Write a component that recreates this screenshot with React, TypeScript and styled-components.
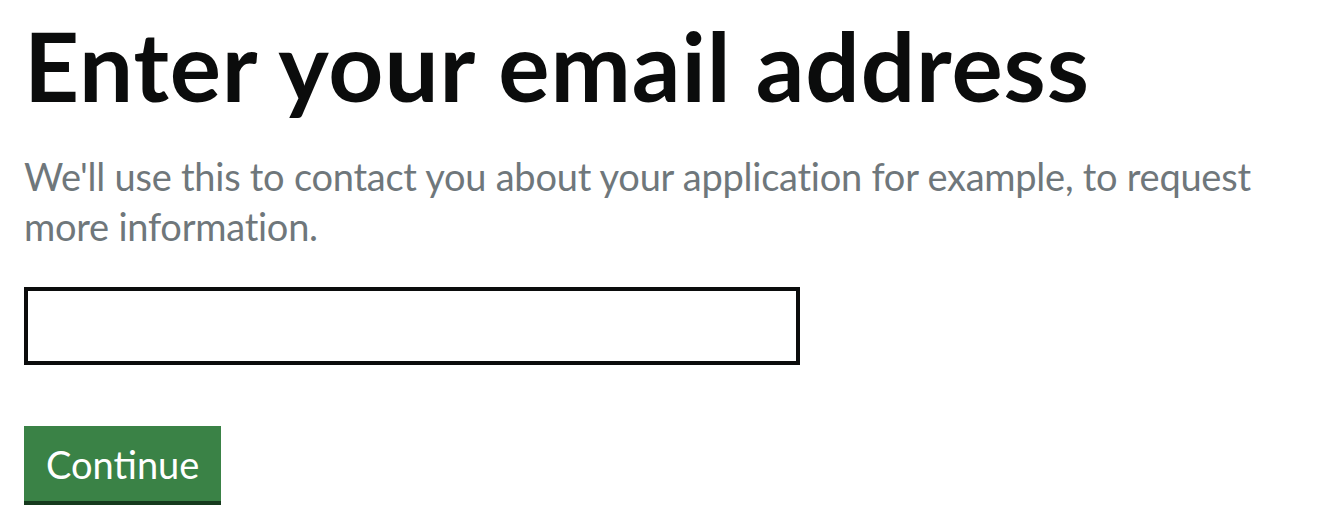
import React from "react";
import styled, { createGlobalStyle } from "styled-components";

const GlobalStyle = createGlobalStyle`
  html, body {
    margin: 0;
    padding: 0;
    background: #ffffff;
  }
  body {
    font-family: Lato, "Liberation Sans", Arial, sans-serif;
    color: #0b0c0c;
  }
  * { box-sizing: border-box; }
`;

const Page = styled.main`
  display: flex;
  flex-direction: column;
  align-items: flex-start;
  padding: 15px 24px 0 24px;
`;

const Heading = styled.h1`
  margin: 0 0 36px 0;
  font-family: Lato, "Liberation Sans", Arial, sans-serif;
  font-weight: 700;
  font-size: 96px;
  line-height: 100px;
  letter-spacing: 0.9px;
  color: #0b0c0c;
`;

const Hint = styled.p`
  margin: 0 0 36px 0;
  max-width: 1290px;
  font-size: 38px;
  line-height: 50px;
  letter-spacing: -0.25px;
  color: #6f777b;
`;

const Input = styled.input`
  display: block;
  width: 776px;
  height: 78px;
  margin: 0 0 61px 0;
  padding: 0 10px;
  border: 4px solid #0b0c0c;
  border-radius: 0;
  background: #ffffff;
  font-family: inherit;
  font-size: 38px;
  outline: none;
`;

const Button = styled.button`
  display: inline-flex;
  align-items: center;
  justify-content: center;
  height: 79px;
  padding: 0 22px;
  border: none;
  border-bottom: 4px solid #163a1d;
  border-radius: 0;
  background: #3a8246;
  color: #ffffff;
  font-family: Lato, "Liberation Sans", Arial, sans-serif;
  font-size: 38px;
  line-height: 1;
  cursor: pointer;
`;

export default function App() {
  return (
    <>
      <GlobalStyle />
      <Page>
        <Heading>Enter your email address</Heading>
        <Hint>
          We'll use this to contact you about your application for example, to
          request more information.
        </Hint>
        <Input type="email" aria-label="Email address" />
        <Button type="button">Continue</Button>
      </Page>
    </>
  );
}
